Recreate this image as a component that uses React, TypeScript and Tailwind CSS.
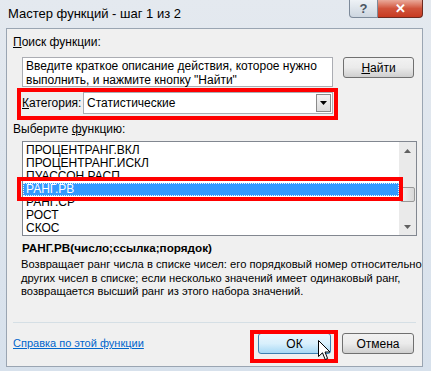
const items = [
  "ПРОЦЕНТРАНГ.ВКЛ",
  "ПРОЦЕНТРАНГ.ИСКЛ",
  "ПУАССОН.РАСП",
  "РАНГ.РВ",
  "РАНГ.СР",
  "РОСТ",
  "СКОС",
];

const ui = { fontFamily: '"Liberation Sans", Arial, sans-serif' };

function Cursor() {
  return (
    <svg width="13" height="21" viewBox="0 0 13 21" className="absolute left-[318px] top-[340px]">
      <path
        d="M0.5 0.5 L0.5 16.5 L4.5 12.8 L7.2 19.5 L9.6 18.5 L7 12 L12 12 Z"
        fill="#fff"
        stroke="#000"
        strokeWidth="1"
        strokeLinejoin="round"
      />
    </svg>
  );
}

export default function App() {
  return (
    <div
      className="relative h-[371px] w-[431px] overflow-hidden bg-gradient-to-b from-[#e4e9ef] to-[#d7e1ec] text-[12px] text-black"
      style={ui}
    >
      {/* title bar */}
      <div className="flex h-[28px] items-start justify-between pr-[8px]">
        <span className="pl-[8px] pt-[6px] text-[13px] leading-[16px] text-black">
          Мастер функций - шаг 1 из 2
        </span>
        <div className="flex">
          <div className="flex h-[18px] w-[29px] items-center justify-center rounded-bl-[4px] border border-t-0 border-[#7d8a9a] bg-gradient-to-b from-[#eef2f6] to-[#cdd6e0] text-[13px] font-bold leading-none text-[#4a5563]">
            ?
          </div>
          <div className="flex h-[18px] w-[45px] items-center justify-center rounded-br-[4px] border border-l-0 border-t-0 border-[#6d2a20] bg-gradient-to-b from-[#e9a99a] via-[#d0533b] to-[#c73a21] text-[13px] font-bold leading-none text-white">
            ✕
          </div>
        </div>
      </div>

      {/* client area */}
      <div className="ml-[6px] flex h-[339px] w-[417px] flex-col border border-[#9aa5b2] bg-[#f0f0f0] px-[6px]">
        <div className="mt-[6px] leading-[15px]">
          <span className="underline">П</span>оиск функции:
        </div>

        <div className="mt-[7px] flex items-start">
          <div className="ml-[9px] h-[30px] w-[311px] border border-[#abadb3] bg-white px-[3px] pt-[1px] leading-[14px]">
            Введите краткое описание действия, которое нужно выполнить, и нажмите кнопку "Найти"
          </div>
          <button className="ml-[10px] h-[21px] w-[71px] rounded-[3px] border border-[#707070] bg-gradient-to-b from-[#f2f2f2] via-[#ebebeb] to-[#cfcfcf] leading-none">
            <span className="underline">Н</span>айти
          </button>
        </div>

        <div className="mt-[4px] flex h-[23px] items-center">
          <span className="ml-[9px] w-[61px]">
            <span className="underline">К</span>атегория:
          </span>
          <div className="flex h-[22px] w-[250px] items-center border border-[#abadb3] bg-white">
            <span className="flex-1 pl-[3px]">Статистические</span>
            <div className="mr-[1px] flex h-[18px] w-[15px] items-center justify-center border border-[#8a8a8a] bg-gradient-to-b from-[#f4f4f4] to-[#dcdcdc]">
              <svg width="7" height="4" viewBox="0 0 7 4">
                <path d="M0 0 H7 L3.5 4 Z" fill="#000" />
              </svg>
            </div>
          </div>
        </div>

        <div className="mt-[8px] leading-[15px]">
          Выберите <span className="underline">ф</span>ункцию:
        </div>

        <div className="ml-[9px] mt-[4px] flex h-[95px] w-[395px] border border-[#828790] bg-white">
          <div className="flex-1 pt-[2px] text-[12px]">
            {items.map((it) =>
              it === "РАНГ.РВ" ? (
                <div
                  key={it}
                  className="h-[13px] border border-dotted border-[#e8f2ff] bg-[#3399ff] pl-[2px] leading-[11px] text-white"
                >
                  {it}
                </div>
              ) : (
                <div key={it} className="h-[13px] pl-[3px] leading-[13px]">
                  {it}
                </div>
              )
            )}
          </div>
          <div className="flex w-[17px] flex-col items-center bg-[#eaeaea]">
            <div className="flex h-[17px] items-center justify-center">
              <svg width="7" height="4" viewBox="0 0 7 4">
                <path d="M3.5 0 L7 4 H0 Z" fill="#606060" />
              </svg>
            </div>
            <div className="mt-[28px] h-[15px] w-[15px] rounded-[2px] border border-[#989898] bg-gradient-to-r from-[#f0f0f0] to-[#d8d8d8]" />
            <div className="flex-1" />
            <div className="flex h-[17px] items-center justify-center">
              <svg width="7" height="4" viewBox="0 0 7 4">
                <path d="M0 0 H7 L3.5 4 Z" fill="#606060" />
              </svg>
            </div>
          </div>
        </div>

        <div className="ml-[9px] mt-[4px] text-[11.7px] font-bold leading-[15px]">
          РАНГ.РВ(число;ссылка;порядок)
        </div>
        <div className="-mr-[8px] ml-[8px] mt-[3px] text-[11.2px] leading-[13.5px]">
          Возвращает ранг числа в списке чисел: его порядковый номер относительно других чисел в
          списке; если несколько значений имеет одинаковый ранг, возвращается высший ранг из этого
          набора значений.
        </div>

        <div className="flex-1" />
        <div className="h-px bg-[#d5dfe5]" />

        <div className="flex h-[43px] items-center pb-[2px]">
          <span className="flex-1 text-[11px] text-[#0066cc] underline">Справка по этой функции</span>
          <button className="h-[21px] w-[73px] rounded-[3px] border border-[#3c7fb1] bg-gradient-to-b from-[#eaf6fd] via-[#d9f0fc] to-[#a7d9f5] leading-none">
            ОК
          </button>
          <button className="ml-[11px] mr-[2px] h-[21px] w-[72px] rounded-[3px] border border-[#707070] bg-gradient-to-b from-[#f2f2f2] via-[#ebebeb] to-[#cfcfcf] leading-none">
            Отмена
          </button>
        </div>
      </div>

      {/* red highlight frames */}
      <div className="pointer-events-none absolute left-[17px] top-[88px] h-[32px] w-[321px] border-[4px] border-[#ff0000]" />
      <div className="pointer-events-none absolute left-[17px] top-[177px] h-[24px] w-[386px] border-[4px] border-[#ff0000]" />
      <div className="pointer-events-none absolute left-[250px] top-[330px] h-[33px] w-[88px] border-[4px] border-[#ff0000]" />

      <Cursor />
    </div>
  );
}
